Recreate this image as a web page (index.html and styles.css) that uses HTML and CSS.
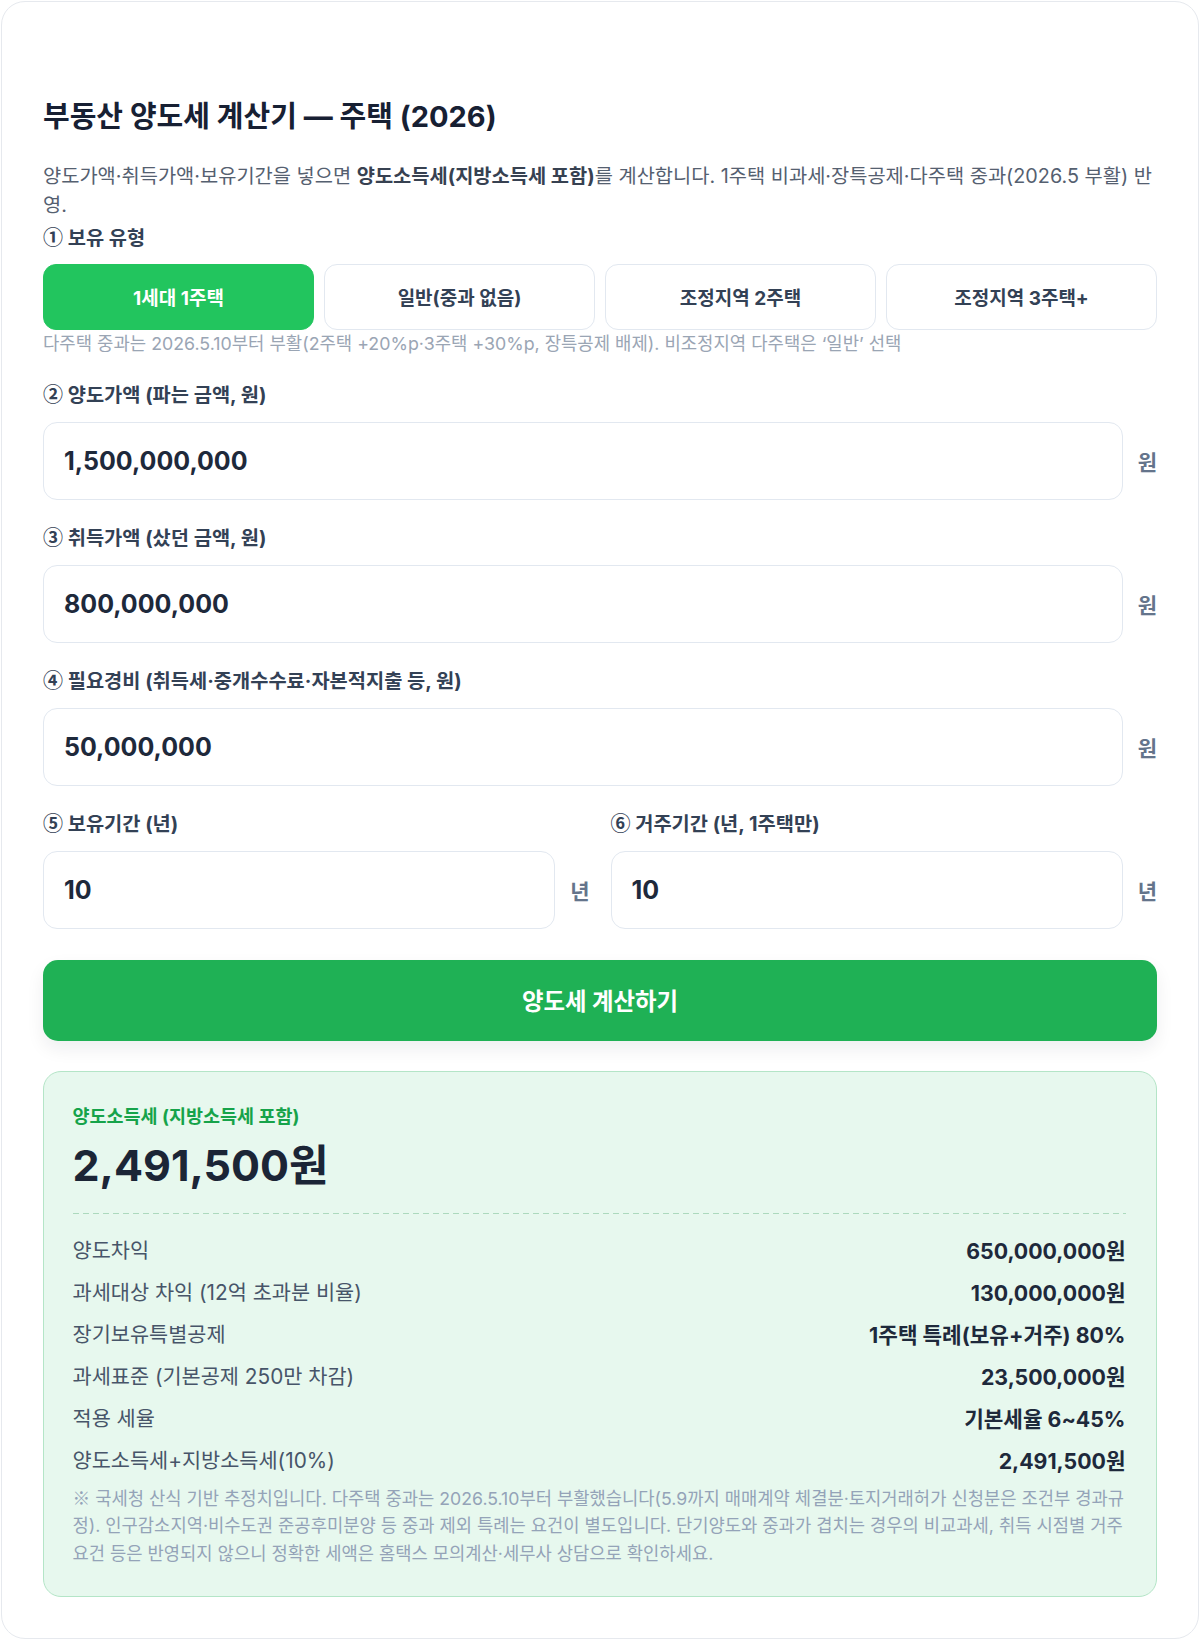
FILE: index.html
```html
<!DOCTYPE html>
<html lang="ko">
<head>
<meta charset="utf-8">
<title>부동산 양도세 계산기</title>
<link rel="stylesheet" href="styles.css">
</head>
<body>
<div class="card">
  <h1 class="title">부동산 양도세 계산기 — 주택 (2026)</h1>
  <p class="desc">양도가액·취득가액·보유기간을 넣으면 <b>양도소득세(지방소득세 포함)</b>를 계산합니다. 1주택 비과세·장특공제·다주택 중과(2026.5 부활) 반영.</p>

  <div class="label first"><span class="circ">①</span> 보유 유형</div>
  <div class="seg">
    <div class="seg-btn active">1세대 1주택</div>
    <div class="seg-btn">일반(중과 없음)</div>
    <div class="seg-btn">조정지역 2주택</div>
    <div class="seg-btn">조정지역 3주택+</div>
  </div>
  <div class="hint">다주택 중과는 2026.5.10부터 부활(2주택 +20%p·3주택 +30%p, 장특공제 배제). 비조정지역 다주택은 ‘일반’ 선택</div>

  <div class="field f2">
    <div class="label"><span class="circ">②</span> 양도가액 (파는 금액, 원)</div>
    <div class="input-row">
      <div class="input">1,500,000,000</div>
      <span class="unit">원</span>
    </div>
  </div>

  <div class="field">
    <div class="label"><span class="circ">③</span> 취득가액 (샀던 금액, 원)</div>
    <div class="input-row">
      <div class="input">800,000,000</div>
      <span class="unit">원</span>
    </div>
  </div>

  <div class="field">
    <div class="label"><span class="circ">④</span> 필요경비 (취득세·중개수수료·자본적지출 등, 원)</div>
    <div class="input-row">
      <div class="input">50,000,000</div>
      <span class="unit">원</span>
    </div>
  </div>

  <div class="field two">
    <div class="col">
      <div class="label"><span class="circ">⑤</span> 보유기간 (년)</div>
      <div class="input-row">
        <div class="input">10</div>
        <span class="unit">년</span>
      </div>
    </div>
    <div class="col">
      <div class="label"><span class="circ">⑥</span> 거주기간 (년, 1주택만)</div>
      <div class="input-row">
        <div class="input">10</div>
        <span class="unit">년</span>
      </div>
    </div>
  </div>

  <div class="calc-btn">양도세 계산하기</div>

  <div class="result">
    <div class="r-label">양도소득세 (지방소득세 포함)</div>
    <div class="r-total">2,491,500원</div>
    <div class="r-divider"></div>
    <div class="r-row"><span class="k">양도차익</span><span class="v">650,000,000원</span></div>
    <div class="r-row"><span class="k">과세대상 차익 (12억 초과분 비율)</span><span class="v">130,000,000원</span></div>
    <div class="r-row"><span class="k">장기보유특별공제</span><span class="v">1주택 특례(보유+거주) 80%</span></div>
    <div class="r-row"><span class="k">과세표준 (기본공제 250만 차감)</span><span class="v">23,500,000원</span></div>
    <div class="r-row"><span class="k">적용 세율</span><span class="v">기본세율 6~45%</span></div>
    <div class="r-row"><span class="k">양도소득세+지방소득세(10%)</span><span class="v">2,491,500원</span></div>
    <p class="note"><span class="ref">※</span> 국세청 산식 기반 추정치입니다. 다주택 중과는 2026.5.10부터 부활했습니다(5.9까지 매매계약 체결분·토지거래허가 신청분은 조건부 경과규정). 인구감소지역·비수도권 준공후미분양 등 중과 제외 특례는 요건이 별도입니다. 단기양도와 중과가 겹치는 경우의 비교과세, 취득 시점별 거주 요건 등은 반영되지 않으니 정확한 세액은 홈택스 모의계산·세무사 상담으로 확인하세요.</p>
  </div>
</div>
</body>
</html>
```
FILE: styles.css
```css
* { box-sizing: border-box; }
html, body { margin: 0; padding: 0; background: #ffffff; }
body {
  font-family: Inter, "Noto Sans CJK KR", sans-serif;
  color: #1e293b;
}
.card {
  margin: 1px;
  min-height: 1638px;
  border: 1px solid #e6e9ee;
  border-radius: 24px;
  padding: 97px 41px 38px 41px;
  background: #fff;
}
.title {
  margin: 0;
  font-size: 29px;
  line-height: 36px;
  font-weight: 700;
  color: #172033;
}
.desc {
  margin: 26.5px 0 0 0;
  font-size: 19.8px;
  line-height: 29px;
  color: #556070;
}
.desc b { color: #374151; font-weight: 700; }
.label {
  height: 24px;
  font-size: 19.8px;
  line-height: 24px;
  font-weight: 700;
  color: #334155;
  white-space: nowrap;
}
.circ {
  font-family: "Noto Sans CJK KR", sans-serif;
  font-size: 20px;
  line-height: 1;
  font-weight: 700;
  color: #334155;
}
.label.first { margin-top: 6px; }
.seg {
  margin-top: 14px;
  display: grid;
  grid-template-columns: repeat(4, 1fr);
  gap: 10px;
}
.seg-btn {
  height: 66px;
  border: 1.5px solid #e2e8f0;
  border-radius: 13px;
  display: flex;
  align-items: center;
  justify-content: center;
  font-size: 19px;
  font-weight: 700;
  color: #334155;
  background: #fff;
}
.seg-btn.active {
  background: #22c55e;
  border-color: #22c55e;
  color: #fff;
}
.hint {
  margin-top: 2px;
  font-size: 17.8px;
  line-height: 23px;
  color: #9aa5b4;
}
.field { margin-top: 26px; }
.field.f2 { margin-top: 28.5px; }
.field .label { margin-bottom: 15px; }
.field.two {
  display: grid;
  grid-template-columns: 1fr 1fr;
  gap: 21px;
}
.input-row {
  display: grid;
  grid-template-columns: 1fr auto;
  align-items: center;
  gap: 15px;
}
.input {
  height: 78px;
  border: 1.5px solid #e2e8f0;
  border-radius: 14px;
  padding: 0 20px;
  display: flex;
  align-items: center;
  font-size: 25px;
  font-weight: 700;
  color: #1e293b;
  background: #fff;
}
.unit {
  font-size: 21px;
  font-weight: 700;
  color: #64748b;
}
.calc-btn {
  margin-top: 30.5px;
  height: 81px;
  border-radius: 15px;
  background: #1fb155;
  color: #fff;
  font-size: 23.4px;
  font-weight: 700;
  display: flex;
  align-items: center;
  justify-content: center;
  box-shadow: 0 8px 18px rgba(15, 23, 42, 0.07);
}
.result {
  margin-top: 30px;
  background: #e7f8ee;
  border: 1.5px solid #b4e5c7;
  border-radius: 18px;
  padding: 33px 30.5px 28px 28.5px;
}
.r-label {
  font-size: 18.5px;
  line-height: 22px;
  font-weight: 700;
  color: #16a34a;
}
.r-total {
  margin-top: 13px;
  font-size: 43px;
  line-height: 50px;
  font-weight: 700;
  color: #1b2536;
}
.r-divider {
  margin-top: 23px;
  height: 1.5px;
  background: repeating-linear-gradient(to right, #acd9bd 0 6px, transparent 6px 10px);
  margin-bottom: 15.5px;
}
.r-row {
  display: flex;
  justify-content: space-between;
  align-items: center;
  padding: 6px 0;
  line-height: 30px;
}
.r-row .k { color: #475569; font-size: 20.8px; }
.r-row .v { font-weight: 700; color: #1e293b; font-size: 21.3px; }
.note {
  margin: 3px 0 0 0;
  font-size: 17.7px;
  line-height: 27.7px;
  color: #94a3b8;
}
.note .ref { font-family: "Noto Sans CJK KR", sans-serif; line-height: 1; }
```
